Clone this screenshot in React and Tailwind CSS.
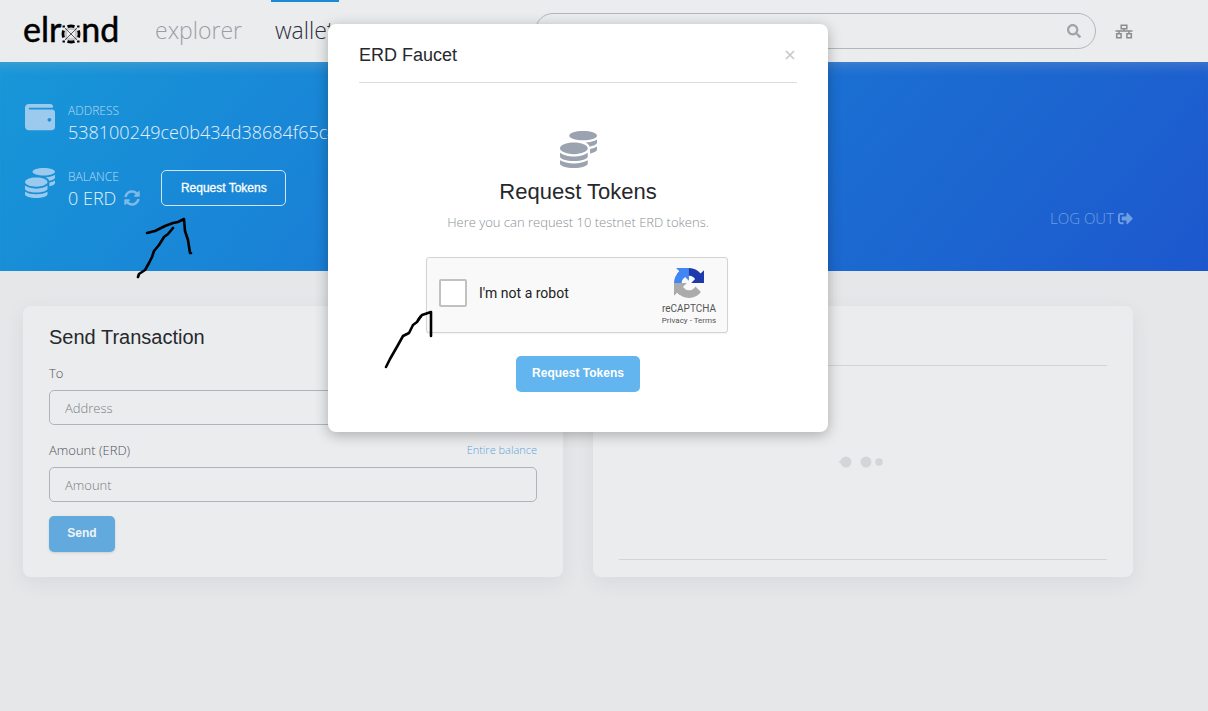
import React, { useState } from "react";
import { FaCoins, FaSearch, FaSignOutAlt, FaSyncAlt, FaWallet } from "react-icons/fa";

const Logo = () => (
  <a
    href="#home"
    aria-label="elrond"
    className="flex h-[62px] w-[98px] items-center pb-1 font-['Lato',sans-serif] text-[34px] leading-none text-black [-webkit-text-stroke:0.5px_black]"
  >
    <span>elr</span>
    <svg viewBox="0 0 20 20" className="mt-2.5 h-5 w-5 shrink-0" fill="none" stroke="currentColor">
      <path d="M6.5 2.6q3.5-1.2 7 0M6.5 17.4q3.5 1.2 7 0M2.6 6.5q-1.2 3.5 0 7M17.4 6.5q1.2 3.5 0 7" strokeWidth="2.8" />
      <path d="M4 4l12 12M16 4L4 16" strokeWidth="0.6" />
      <path d="M5 5.5v9M15 5.5v9M5.5 5h9M5.5 15h9" strokeWidth="0.6" strokeDasharray="1 1" />
      <path d="M1.5 2.5h2.4M16.1 2.5h2.4M1.5 17.5h2.4M16.1 17.5h2.4" strokeWidth="2.2" />
    </svg>
    <span>nd</span>
  </a>
);

const NetworkIcon = () => (
  <svg viewBox="0 0 18 15" className="h-[15px] w-[18px]" fill="none" stroke="#8b8d8d" strokeWidth="1.5">
    <path d="M6.2 1.2h5.6v3.6H6.2zM1.7 9.8h4.4v4H1.7zM11.9 9.8h4.4v4h-4.4zM0.5 7h17M9 4.8V7M4 7v2.8M14 7v2.8" />
  </svg>
);

const RecaptchaLogo = () => (
  <svg viewBox="0 0 64 64" className="h-[30px] w-[30px]">
    <path
      fill="#1c3aa9"
      d="M64 31.955l-.033-1.37V4.687l-7.16 7.16C50.948 4.674 42.033.093 32.05.093c-10.4 0-19.622 4.96-25.458 12.64l11.736 11.86a15.55 15.55 0 0 1 4.754-5.334c2.05-1.6 4.952-2.906 8.968-2.906.485 0 .86.057 1.135.163 4.976.393 9.288 3.14 11.828 7.124l-8.307 8.307L64 31.953"
    />
    <path
      fill="#4285f4"
      d="M31.862.094l-1.37.033H4.594l7.16 7.16C4.58 13.147 0 22.06 0 32.046c0 10.4 4.96 19.622 12.64 25.458L24.5 45.768a15.55 15.55 0 0 1-5.334-4.754c-1.6-2.05-2.906-4.952-2.906-8.968 0-.485.057-.86.163-1.135.393-4.976 3.14-9.288 7.124-11.828l8.307 8.307L31.86.095"
    />
    <path
      fill="#ababab"
      d="M.001 32.045l.033 1.37v25.898l7.16-7.16c5.86 7.173 14.774 11.754 24.76 11.754 10.4 0 19.622-4.96 25.458-12.64l-11.736-11.86a15.55 15.55 0 0 1-4.754 5.334c-2.05 1.6-4.952 2.906-8.968 2.906-.485 0-.86-.057-1.135-.163-4.976-.393-9.288-3.14-11.828-7.124l8.307-8.307L.001 32.047"
    />
  </svg>
);

const Header = () => (
  <header className="flex h-[62px] items-start bg-[#ebecee] pr-[75px] pl-[23px]">
    <Logo />
    <nav className="ml-[30px] flex gap-[25px] text-[23px] font-light">
      <a href="#explorer" className="flex h-[62px] items-center border-t-2 border-transparent px-1 pb-1 text-[#9c9ea5]">
        explorer
      </a>
      <a href="#wallet" className="flex h-[62px] items-center border-t-2 border-[#1a8ad4] px-1 pb-1 text-[#2e2f3a]">
        wallet
      </a>
    </nav>
    <form className="mt-[13px] ml-auto flex h-9 w-[561px] items-center rounded-full border border-[#b3b6bb] pr-3.5">
      <input type="text" aria-label="Search" className="h-full min-w-0 flex-1 rounded-full pl-4 text-sm outline-none" />
      <button type="button" aria-label="Submit search" className="text-[#9fa3aa]">
        <FaSearch size={14} />
      </button>
    </form>
    <button type="button" aria-label="Network" className="mt-6 ml-[19px]">
      <NetworkIcon />
    </button>
  </header>
);

const AccountBar = () => (
  <section className="flex h-[209px] items-start justify-between bg-linear-[130deg,#1797d8_0%,#1a80d6_35%,#1b6dd2_65%,#1c65d0_80%,#1d57ce_100%] pr-[75px] pl-[25px] text-[#e3f0fb] shadow-[inset_0_12px_12px_-8px_rgba(190,190,190,0.25)]">
    <div className="mt-10 flex flex-col gap-5">
      <div className="flex gap-[13px]">
        <FaWallet size={30} className="text-[#9ccaee]" />
        <div className="font-light">
          <div className="text-xs leading-[18px] text-[#b9daf4]">ADDRESS</div>
          <div className="pb-1 text-lg leading-6">538100249ce0b434d38684f65c4</div>
        </div>
      </div>
      <div className="flex gap-[13px]">
        <FaCoins size={30} className="text-[#9ccaee]" />
        <div className="font-light">
          <div className="text-xs leading-[18px] text-[#b9daf4]">BALANCE</div>
          <div className="flex items-center gap-2 pb-1 text-lg leading-6">
            0 ERD
            <button type="button" aria-label="Refresh balance" className="text-[#7fb9ea]">
              <FaSyncAlt size={16} />
            </button>
          </div>
        </div>
        <button
          type="button"
          className="mt-0.5 ml-2 h-9 w-[125px] rounded-[5px] border border-[#cfe5f7] font-['Liberation_Sans',sans-serif] text-xs text-white [-webkit-text-stroke:0.3px_white]"
        >
          Request Tokens
        </button>
      </div>
    </div>
    <a href="#logout" className="mt-36 flex items-center gap-1 text-[15px] leading-6 font-light text-[#6f9fe3]">
      LOG OUT <FaSignOutAlt size={15} />
    </a>
  </section>
);

const SendCard = () => {
  const [to, setTo] = useState("");
  const [amount, setAmount] = useState("");

  return (
    <form className="rounded-lg bg-[#ebecee] px-[26px] pt-4 pb-[25px] shadow-[0_6px_20px_rgba(60,70,80,0.08)]">
      <h2 className="font-['Liberation_Sans',sans-serif] text-xl leading-[30px] text-[#26282c]">Send Transaction</h2>
      <label htmlFor="to" className="mt-3 block text-[13px] leading-[18px] font-light text-[#50535a]">
        To
      </label>
      <input
        id="to"
        type="text"
        placeholder="Address"
        value={to}
        onChange={(e) => setTo(e.target.value)}
        className="mt-2 block h-[35px] w-full rounded-[5px] border border-[#b0b4b9] px-[15px] text-[13px] font-light placeholder:text-[#797c82]"
      />
      <div className="mt-4 flex items-center justify-between font-light">
        <label htmlFor="amount" className="text-[13px] leading-[18px] text-[#50535a]">
          Amount (ERD)
        </label>
        <a href="#max" className="text-[11px] leading-[18px] text-[#5fa2da]">
          Entire balance
        </a>
      </div>
      <input
        id="amount"
        type="text"
        placeholder="Amount"
        value={amount}
        onChange={(e) => setAmount(e.target.value)}
        className="mt-2 block h-[35px] w-full rounded-[5px] border border-[#b0b4b9] px-[15px] text-[13px] font-light placeholder:text-[#797c82]"
      />
      <button
        type="button"
        className="mt-[14px] h-9 w-[66px] rounded-[5px] bg-[#62aade] pb-0.5 font-['Liberation_Sans',sans-serif] text-xs font-bold text-[#edf4fa] shadow-sm"
      >
        Send
      </button>
    </form>
  );
};

const HistoryCard = () => (
  <section className="flex flex-col rounded-lg bg-[#ebecee] px-[26px] pt-4 pb-[17px] shadow-[0_6px_20px_rgba(60,70,80,0.08)]">
    <div className="h-11 border-b border-[#d2d4d7]" />
    <div className="flex flex-1 items-center justify-center border-b border-[#d2d4d7] pr-1 pb-0.5">
      <svg viewBox="0 0 46 12" className="h-3 w-[46px]" fill="#d3d6d8">
        <path d="M0 6l4-2v4z" />
        <circle cx="8" cy="6" r="5.5" />
        <circle cx="28" cy="6" r="5.5" />
        <circle cx="41" cy="6" r="3.8" />
      </svg>
    </div>
  </section>
);

const FaucetModal = () => {
  const [checked, setChecked] = useState(false);

  return (
    <div
      role="dialog"
      aria-label="ERD Faucet"
      className="w-[500px] rounded-lg bg-white px-[31px] pb-10 shadow-[0_3px_14px_rgba(0,0,0,0.28)]"
    >
      <div className="flex h-[59px] items-center justify-between border-b border-[#dcdedf] pt-1">
        <h2 className="font-['Liberation_Sans',sans-serif] text-lg text-[#26282c]">ERD Faucet</h2>
        <button type="button" aria-label="Close" className="mr-0.5">
          <svg viewBox="0 0 10 10" className="h-[10px] w-[10px]" stroke="#c6c8cb" strokeWidth="1.7">
            <path d="M1 1l8 8M9 1L1 9" />
          </svg>
        </button>
      </div>
      <div className="flex flex-col items-center pt-12">
        <FaCoins size={37} className="text-[#9aa3af]" />
        <h3 className="mt-2 font-['Liberation_Sans',sans-serif] text-[22px] leading-8 text-[#26282c]">Request Tokens</h3>
        <p className="mt-0.5 text-[13px] leading-6 font-light text-[#8a8f96]">
          Here you can request 10 testnet ERD tokens.
        </p>
        <div className="mt-[23px] mr-0.5 flex h-[76px] w-[302px] items-center rounded-[3px] border border-[#d3d3d3] bg-[#f9f9f9] pr-[9px] pb-1 pl-3 font-['Roboto',sans-serif] shadow-xs">
          <input
            id="robot"
            type="checkbox"
            checked={checked}
            onChange={(e) => setChecked(e.target.checked)}
            className="h-7 w-7 appearance-none rounded-xs border-2 border-[#c1c1c1] bg-white checked:bg-[#4285f4]"
          />
          <label htmlFor="robot" className="ml-3 flex-1 text-sm text-[#222]">
            I'm not a robot
          </label>
          <div className="flex w-[58px] flex-col items-center pt-2 text-[#555]">
            <RecaptchaLogo />
            <div className="mt-1 text-[10px] leading-[14px]">reCAPTCHA</div>
            <div className="text-[8px] leading-[10px] whitespace-nowrap">
              <a href="#privacy">Privacy</a> - <a href="#terms">Terms</a>
            </div>
          </div>
        </div>
        <button
          type="button"
          className="mt-[23px] h-9 w-[124px] rounded-[5px] bg-[#62b5ee] pb-0.5 font-['Liberation_Sans',sans-serif] text-xs font-bold text-white"
        >
          Request Tokens
        </button>
      </div>
    </div>
  );
};

// hand drawn pointers to the two steps of the guide
const Arrows = () => (
  <svg
    viewBox="0 0 310 170"
    className="pointer-events-none absolute top-[210px] left-[130px] h-[170px] w-[310px]"
    fill="none"
    stroke="#000"
    strokeWidth="2.6"
    strokeLinecap="round"
    strokeLinejoin="round"
  >
    <path d="M8 67l1-3 6-4 4-7 3-6 2-6 5-6 5-8 4-3 5-6" />
    <path d="M17 23l8-2 10-5 8-3 5-1 6-3 1 12 3 9 2 13h1" />
    <path d="M256 157l4-8 8-14 5-9 6-3 4-8 4-3 4-6" />
    <path d="M288 110l4-5 9-3v24" />
  </svg>
);

const App = () => {
  return (
    <div className="relative min-h-screen bg-[#e6e7e9] font-['Open_Sans','Noto_Sans',sans-serif]">
      <Header />
      <AccountBar />
      <main className="grid grid-cols-2 gap-[30px] pt-[35px] pr-[75px] pb-8 pl-[23px]">
        <SendCard />
        <HistoryCard />
      </main>
      <div className="absolute inset-x-0 top-6 flex justify-center pr-[52px]">
        <FaucetModal />
      </div>
      <Arrows />
    </div>
  );
};

export default App;
